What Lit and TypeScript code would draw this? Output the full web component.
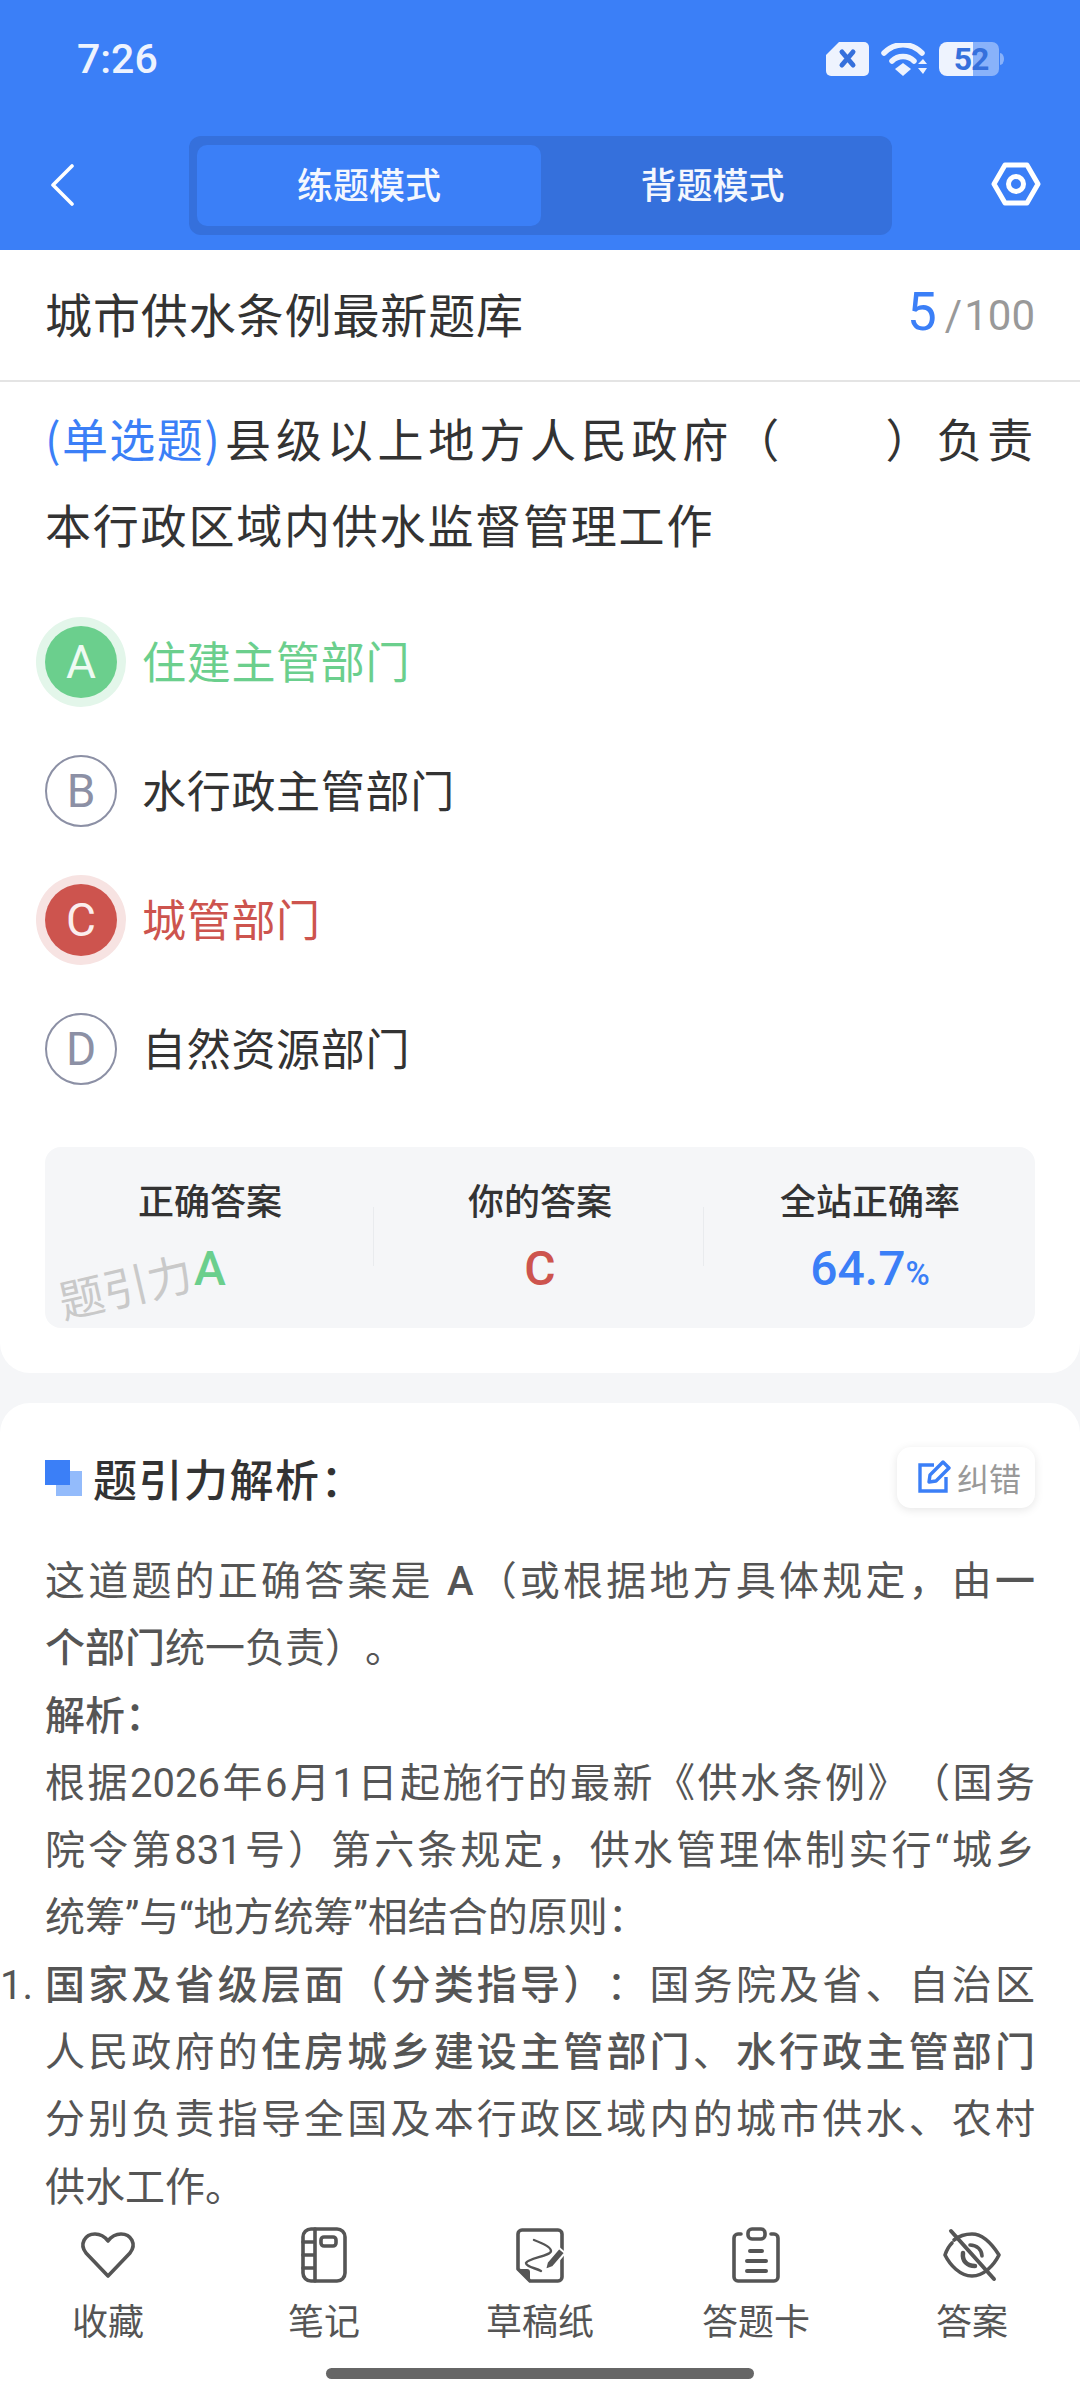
import { LitElement, html, css } from "lit";
import { customElement } from "lit/decorators.js";

@customElement("app-root")
export class AppRoot extends LitElement {
  static styles = css`
    :host { display: block; width: 1080px; height: 2400px; overflow: hidden; background: #f5f6f8; font-family: "Roboto", "Noto Sans CJK SC", sans-serif; color: #333; text-spacing-trim: space-all; }
    .page { display: flex; flex-direction: column; height: 2400px; }
    .scroll { flex: 1; min-height: 0; overflow: hidden; background: #f5f6f8; }
    .head { background: #3b7ff7; height: 250px; color: #fff; }
    .status { height: 136px; box-sizing: border-box; padding: 38px 76px 0 77px; display: flex; justify-content: space-between; align-items: flex-start; }
    .time { font: 500 41px/42px Roboto, sans-serif; color: #eef3fe; }
    .sys { display: flex; align-items: flex-start; gap: 12px; padding-top: 4px; }
    .sys svg { display: block; }
    .batt { position: relative; width: 65px; height: 34px; }
    .batt span { position: absolute; left: 0; right: 1px; top: 0; text-align: center; font: 700 32px/34px Roboto, sans-serif; color: #3570dc; letter-spacing: -1px; }
    .nav { display: grid; grid-template-columns: 189px 703px 1fr; align-items: center; height: 99px; }
    .back { padding: 0 0 2px 50px; display: flex; }
    .tabs { height: 99px; box-sizing: border-box; background: #3570dc; border-radius: 12px; padding: 9px 8px; display: grid; grid-template-columns: 344px 1fr; align-items: stretch; }
    .tab { display: flex; align-items: center; justify-content: center; padding-bottom: 5px; box-sizing: border-box; font: 500 36px/1 "Noto Sans CJK SC", sans-serif; color: #f4f7fe; border-radius: 10px; }
    .tab.on { background: #3b7ff7; }
    .gear { padding: 0 0 4px 99px; display: flex; }

    .card1 { background: #fff; border-radius: 0 0 30px 30px; padding-bottom: 45px; }
    .titlebar { height: 125px; padding: 0 45px 5px; border-bottom: 2px solid #e4e4e4; box-sizing: content-box; display: flex; align-items: center; justify-content: space-between; }
    .title { font: 400 47px/1 "Noto Sans CJK SC", sans-serif; letter-spacing: .9px; color: #333; }
    .count { display: flex; align-items: baseline; color: #999; font: 400 42px/1 Roboto, sans-serif; }
    .count b { font: 400 53px/1 Roboto, sans-serif; color: #3b7ff7; margin-right: 8px; }
    .count i { font-style: normal; margin-right: 2px; }
    .q { margin-top: 12px; padding: 0 45px; font: 400 46px/86px "Noto Sans CJK SC", sans-serif; letter-spacing: 1.8px; color: #333; }
    .q div.full { text-align: justify; text-align-last: justify; }
    .q em { display: inline-block; font-style: normal; color: #3b7ff7; letter-spacing: 1.4px; margin-right: 1px; }
    .opts { margin-top: 31px; padding: 0 45px; }
    .opt { height: 129px; display: flex; align-items: center; gap: 25px; font: 400 44px/1 "Noto Sans CJK SC", sans-serif; letter-spacing: .7px; color: #333; }
    .t { margin-top: -3px; }
    .dot { width: 72px; height: 72px; border-radius: 50%; box-sizing: border-box; border: 2px solid #8c90a5; color: #8c90a5; display: flex; align-items: center; justify-content: center; font: 400 46px/1 Roboto, sans-serif; letter-spacing: 0; flex: none; }
    .opt.ok { color: #6bcf8d; }
    .opt.ok .dot { background: #6bcf8d; border: 0; color: #eefaf2; box-shadow: 0 0 0 9px #e3f6ea; }
    .opt.bad { color: #cd544e; }
    .opt.bad .dot { background: #cd544e; border: 0; color: #fbeeed; box-shadow: 0 0 0 9px #f7e3e2; }
    .stats { position: relative; margin: 34px 45px 0; height: 181px; background: #f5f6f8; border-radius: 16px; display: grid; grid-template-columns: 330px 330px 1fr; }
    .stat { display: flex; flex-direction: column; align-items: center; padding-top: 29px; box-sizing: border-box; position: relative; }
    .stat + .stat::before { content: ""; position: absolute; left: -2px; top: 60px; height: 59px; width: 1px; background: #e9ebee; }
    .stat label { font: 500 36px/46px "Noto Sans CJK SC", sans-serif; color: #333; }
    .stat strong { margin-top: 24px; font: 500 48px/46px Roboto, sans-serif; }
    .stat strong small { font-size: 33px; font-weight: 500; }
    .g { color: #6bcf8d; } .r { color: #cd544e; } .b { color: #3b7ff7; }
    .wm { position: absolute; left: 9px; top: 131px; font: 400 45px/1 "Noto Sans CJK SC", sans-serif; color: #c9c9c9; transform: rotate(-13deg); transform-origin: left top; white-space: nowrap; }

    .card2 { margin-top: 30px; background: #fff; border-radius: 30px 30px 0 0; padding: 44px 45px 0; height: 900px; box-sizing: border-box; }
    .h2 { display: flex; align-items: center; justify-content: space-between; height: 61px; }
    .h2l { display: flex; align-items: center; gap: 11px; }
    .sq { position: relative; width: 37px; height: 36px; }
    .sq::before { content: ""; position: absolute; left: 11px; top: 11px; width: 26px; height: 25px; background: #93bbfb; }
    .sq::after { content: ""; position: absolute; left: 0; top: 0; width: 25px; height: 25px; background: #3b7ff7; }
    .h2t { font: 500 44px/1 "Noto Sans CJK SC", sans-serif; letter-spacing: 1.5px; color: #333; }
    .fix { height: 61px; width: 138px; padding: 0 0 2px 6px; box-sizing: border-box; border-radius: 14px; background: #fff; box-shadow: 0 2px 10px rgba(0,0,0,.1); display: flex; align-items: center; justify-content: center; gap: 6px; font: 400 32px/1 "Noto Sans CJK SC", sans-serif; color: #999; }
    .body { margin-top: 40px; font: 400 40px/67.3px Roboto, "Noto Sans CJK SC", sans-serif; color: #555; position: relative; }
    .body .l { text-align: justify; text-align-last: justify; }
    .body .s { text-align-last: left; }
    .body b { font-weight: 500; }
    .num { position: absolute; left: -45px; font-weight: 400; }
    .foot { height: 180px; flex: none; background: #fff; position: relative; }
    .bar { display: grid; grid-template-columns: repeat(5, 216px); }
    .item { display: flex; flex-direction: column; align-items: center; font: 400 36px/1 "Noto Sans CJK SC", sans-serif; color: #555; padding-top: 5px; }
    .item svg { display: block; margin-bottom: 16px; }
    .homebar { position: absolute; left: 326px; top: 148px; width: 428px; height: 11px; border-radius: 6px; background: #666; }
  `;

  render() {
    const ic = "fill:none;stroke:#555;stroke-width:3.6;stroke-linecap:round;stroke-linejoin:round";
    return html`<div class="page">
      <div class="scroll">
      <div class="head">
        <div class="status">
          <div class="time">7:26</div>
          <div class="sys">
            <svg width="43" height="34" viewBox="0 0 43 34"><path d="M13 0H38a5 5 0 0 1 5 5V29a5 5 0 0 1-5 5H5a5 5 0 0 1-5-5V13Z" fill="#eef3fe"/><path d="M16 10l11 13M27 10L16 23" stroke="#3570dc" stroke-width="5" stroke-linecap="round"/></svg>
            <svg width="46" height="33" viewBox="0 0 46 33" style="margin-top:1px"><path d="M3 10C14 -1 30 -1 41 10" fill="none" stroke="#eef3fe" stroke-width="5.5" stroke-linecap="round"/><path d="M11 18C17 12 27 12 33 18" fill="none" stroke="#eef3fe" stroke-width="5.5" stroke-linecap="round"/><path d="M14 26L22 20L30 26L22 33Z" fill="#eef3fe"/><path d="M37 21L42 16L46 21ZM37 25H46L42 31Z" fill="#eef3fe"/></svg>
            <div class="batt">
              <svg width="65" height="34" viewBox="0 0 65 34"><path d="M34 0H53a7 7 0 0 1 7 7V27a7 7 0 0 1-7 7H34Z" fill="#fff" fill-opacity=".4"/><path d="M61 11a4 6 0 0 1 0 12Z" fill="#fff" fill-opacity=".4"/><path d="M34 0H8a8 8 0 0 0-8 8V26a8 8 0 0 0 8 8H34Z" fill="#eef3fe"/></svg>
              <span>52</span>
            </div>
          </div>
        </div>
        <div class="nav">
          <div class="back"><svg width="24" height="42" viewBox="0 0 24 42"><path d="M22 2L3 21L22 40" fill="none" stroke="#fff" stroke-width="3.6" stroke-linecap="round" stroke-linejoin="round"/></svg></div>
          <div class="tabs"><div class="tab on">练题模式</div><div class="tab">背题模式</div></div>
          <div class="gear"><svg width="50" height="44" viewBox="0 0 50 44"><path d="M14 3H36L47 22L36 41H14L3 22Z" fill="none" stroke="#fff" stroke-width="5" stroke-linejoin="round"/><circle cx="25" cy="22" r="7.5" fill="none" stroke="#fff" stroke-width="5"/></svg></div>
        </div>
      </div>

      <div class="card1">
        <div class="titlebar">
          <div class="title">城市供水条例最新题库</div>
          <div class="count"><b>5</b><i>/</i>100</div>
        </div>
        <div class="q">
          <div class="full"><em>(单选题)</em>县级以上地方人民政府（　　）负责</div>
          <div>本行政区域内供水监督管理工作</div>
        </div>
        <div class="opts">
          <div class="opt ok"><span class="dot">A</span><span class="t">住建主管部门</span></div>
          <div class="opt"><span class="dot">B</span><span class="t">水行政主管部门</span></div>
          <div class="opt bad"><span class="dot">C</span><span class="t">城管部门</span></div>
          <div class="opt"><span class="dot">D</span><span class="t">自然资源部门</span></div>
        </div>
        <div class="stats">
          <div class="stat"><label>正确答案</label><strong class="g">A</strong></div>
          <div class="stat"><label>你的答案</label><strong class="r">C</strong></div>
          <div class="stat"><label>全站正确率</label><strong class="b">64.7<small>%</small></strong></div>
          <div class="wm">题引力</div>
        </div>
      </div>

      <div class="card2">
        <div class="h2">
          <div class="h2l"><span class="sq"></span><span class="h2t">题引力解析：</span></div>
          <div class="fix">
            <svg width="34" height="34" viewBox="0 0 34 34"><path d="M17 5H3V31H29V17" fill="none" stroke="#3b7ff7" stroke-width="3.4"/><path d="M12 22L13 15L26 2L32 8L19 21Z" fill="none" stroke="#3b7ff7" stroke-width="3.4" stroke-linejoin="round"/></svg>
            纠错
          </div>
        </div>
        <div class="body">
          <div class="l">这道题的正确答案是 <b>A</b>（或根据地方具体规定，由<b>一</b></div>
          <div class="l s"><b>个部门</b>统一负责）。</div>
          <div class="l s"><b>解析：</b></div>
          <div class="l">根据2026年6月1日起施行的最新《供水条例》（国务</div>
          <div class="l">院令第831号）第六条规定，供水管理体制实行“城乡</div>
          <div class="l s">统筹”与“地方统筹”相结合的原则：</div>
          <div class="l"><span class="num">1.</span><b>国家及省级层面（分类指导）</b>：国务院及省、自治区</div>
          <div class="l">人民政府的<b>住房城乡建设主管部门</b>、<b>水行政主管部门</b></div>
          <div class="l">分别负责指导全国及本行政区域内的城市供水、农村</div>
          <div class="l s">供水工作。</div>
        </div>
      </div>
      </div>

      <div class="foot">
        <div class="bar">
          <div class="item"><svg width="60" height="60" viewBox="0 0 60 60"><path style=${ic} d="M30 51L8 28C1 19 7 9 17 9C23 9 27 12 30 16C33 12 37 9 43 9C53 9 59 19 52 28Z"/></svg>收藏</div>
          <div class="item"><svg width="60" height="60" viewBox="0 0 60 60"><g style=${ic}><rect x="9" y="4" width="42" height="52" rx="8"/><path d="M21 4V56M9 17H21M9 30H21M9 43H21"/><rect x="27" y="12" width="15" height="9" rx="3"/></g></svg>笔记</div>
          <div class="item"><svg width="60" height="60" viewBox="0 0 60 60"><g style=${ic}><path d="M12 5H48a4 4 0 0 1 4 4V52a4 4 0 0 1-4 4H20L8 44V9a4 4 0 0 1 4-4Z"/><path d="M24 15C32 18 41 22 41 26C41 31 18 33 16 38C16 42 26 43 31 46" stroke-width="2.4"/></g><path d="M8 44H17a3 3 0 0 1 3 3V56Z" fill="#555"/><path d="M37 37L49 23L55 28L43 42L35 45Z" fill="#555" stroke="#fff" stroke-width="2"/></svg>草稿纸</div>
          <div class="item"><svg width="60" height="60" viewBox="0 0 60 60"><g style=${ic}><path d="M15 9H12a4 4 0 0 0-4 4V52a4 4 0 0 0 4 4H48a4 4 0 0 0 4-4V13a4 4 0 0 0-4-4H45"/><rect x="22" y="4" width="17" height="10" rx="4"/><path d="M24 26H36M21 36H40M21 46H40" stroke-width="4"/></g></svg>答题卡</div>
          <div class="item"><svg width="60" height="60" viewBox="0 0 60 60"><g style=${ic}><path d="M12 15C17 11 23 9 30 9C40 9 50 19 57 30C52 40 42 51 30 51C18 51 8 40 3 30C4 27 7 21 10 18"/><path d="M28 20C35 20 40 25 40 31"/><path d="M21 28C20 36 25 41 33 41" stroke-width="4.5"/><path d="M9 6L52 54" stroke-width="4"/></g></svg>答案</div>
        </div>
        <div class="homebar"></div>
      </div>
    </div>`;
  }
}
